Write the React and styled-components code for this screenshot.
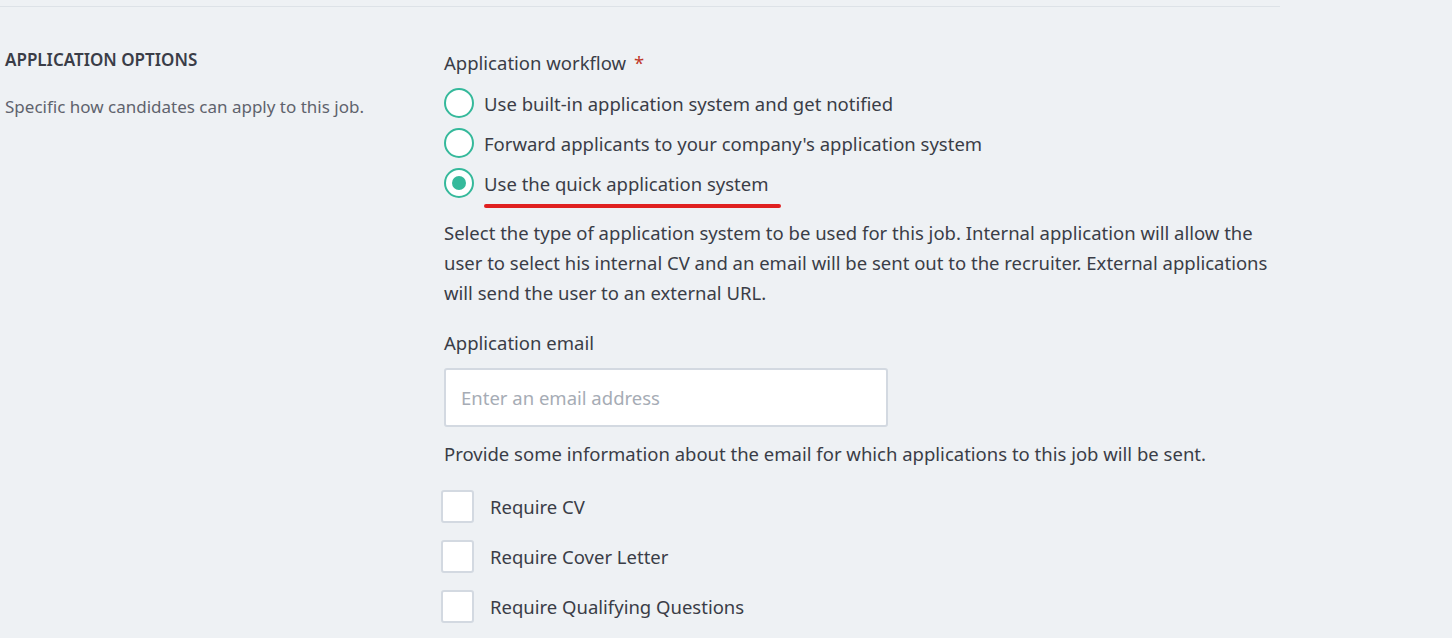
import React from 'react';
import styled, { createGlobalStyle } from 'styled-components';

const GlobalStyle = createGlobalStyle`
  body {
    margin: 0;
    background: #eef1f4;
    font-family: 'Noto Sans', 'Open Sans', sans-serif;
    color: #3a3d47;
  }
`;

const Page = styled.div`
  width: 1280px;
  border-top: 1px solid #dde2e7;
  margin-top: 6px;
`;

const Section = styled.div`
  display: grid;
  grid-template-columns: 439px 840px;
  padding: 36px 0 0 5px;
`;

const SideTitle = styled.h3`
  margin: 6px 0 0;
  font-size: 17px;
  font-weight: 600;
  line-height: 22px;
`;

const SideText = styled.p`
  margin: 24px 0 0;
  font-size: 17px;
  color: #5f636d;
`;

const Label = styled.div`
  font-size: 18.5px;
  line-height: 30px;
  margin-top: ${p => p.$top || 0}px;
`;

const Required = styled.span`
  color: #c0392b;
  margin-left: 8px;
`;

const Radios = styled.div`
  margin-top: 5px;
`;

const RadioRow = styled.label`
  display: flex;
  align-items: center;
  gap: 10px;
  height: 40px;
  font-size: 18.5px;
`;

const RadioCircle = styled.span`
  width: 26px;
  height: 26px;
  border: 2px solid #35b99b;
  border-radius: 50%;
  background: #fff;
  display: flex;
  align-items: center;
  justify-content: center;
  &::after {
    content: '';
    width: 14px;
    height: 14px;
    border-radius: 50%;
    background: ${p => (p.$checked ? '#35b99b' : 'transparent')};
  }
`;

const Marked = styled.span`
  position: relative;
  &::after {
    content: '';
    position: absolute;
    left: 0;
    right: -12px;
    bottom: -12px;
    height: 4px;
    border-radius: 2px;
    background: #e02020;
  }
`;

const Help = styled.p`
  margin: ${p => p.$top || 0}px 0 0;
  font-size: 18.5px;
  line-height: 30px;
`;

const Input = styled.input`
  box-sizing: border-box;
  width: 444px;
  height: 59px;
  margin-top: 10px;
  border: 2px solid #d3d9e1;
  border-radius: 3px;
  padding: 0 15px;
  font: inherit;
  font-size: 18.5px;
  &::placeholder { color: #a6acb5; }
`;

const Checks = styled.div`
  margin-top: 12px;
`;

const CheckRow = styled.label`
  display: flex;
  align-items: center;
  gap: 16px;
  height: 50px;
  margin-left: -3px;
  font-size: 18.5px;
`;

const CheckBox = styled.span`
  box-sizing: border-box;
  width: 33px;
  height: 33px;
  border: 2px solid #d3d9e1;
  border-radius: 3px;
  background: #fff;
`;

const radios = [
  'Use built-in application system and get notified',
  "Forward applicants to your company's application system",
  'Use the quick application system',
];

const checks = ['Require CV', 'Require Cover Letter', 'Require Qualifying Questions'];

export default function App() {
  return (
    <Page>
      <GlobalStyle />
      <Section>
        <div>
          <SideTitle>APPLICATION OPTIONS</SideTitle>
          <SideText>Specific how candidates can apply to this job.</SideText>
        </div>
        <div>
          <Label $top={5}>Application workflow<Required>*</Required></Label>
          <Radios>
            {radios.map((r, i) => (
              <RadioRow key={r}>
                <RadioCircle $checked={i === 2} />
                {i === 2 ? <Marked>{r}</Marked> : r}
              </RadioRow>
            ))}
          </Radios>
          <Help $top={15}>
            Select the type of application system to be used for this job. Internal application will allow the
            user to select his internal CV and an email will be sent out to the recruiter. External applications
            will send the user to an external URL.
          </Help>
          <Label $top={20}>Application email</Label>
          <Input placeholder="Enter an email address" />
          <Help $top={12}>Provide some information about the email for which applications to this job will be sent.</Help>
          <Checks>
            {checks.map(c => (
              <CheckRow key={c}>
                <CheckBox />
                {c}
              </CheckRow>
            ))}
          </Checks>
        </div>
      </Section>
    </Page>
  );
}
